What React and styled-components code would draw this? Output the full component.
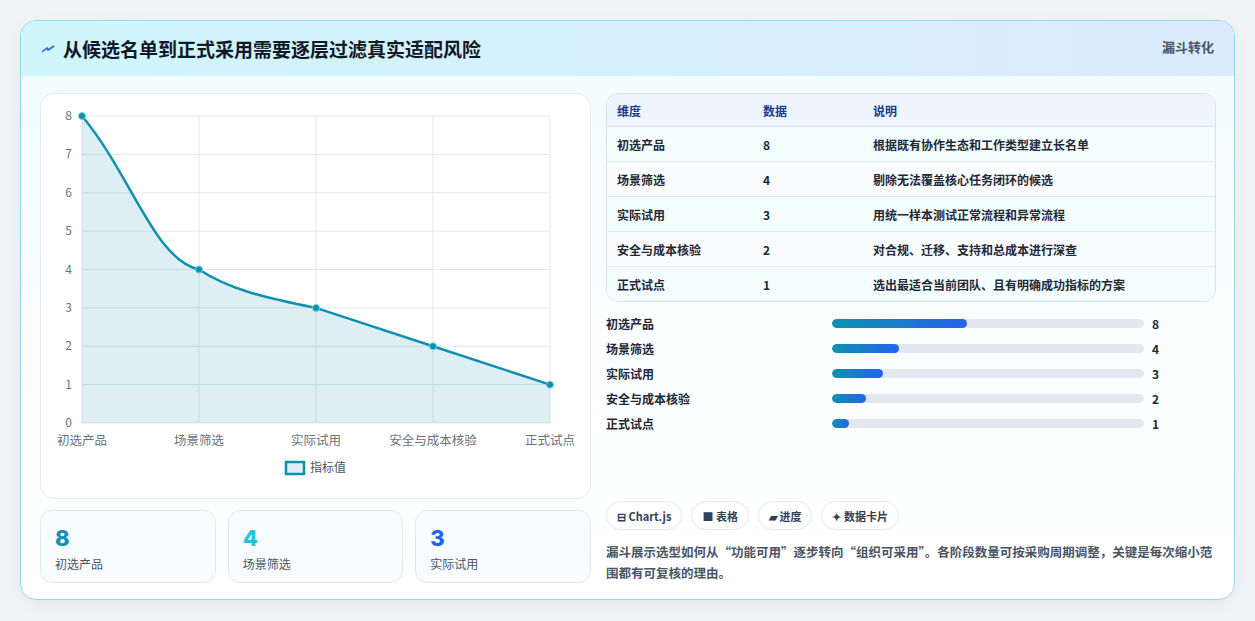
import React from "react";
import styled, { createGlobalStyle } from "styled-components";

const G = createGlobalStyle`
  body{margin:0;background:#f1f3f6;font-family:"Noto Sans CJK SC","Noto Sans",sans-serif;}
`;
const Page = styled.div`padding:20px 20px 0 20px;height:621px;box-sizing:border-box;`;
const Card = styled.div`
  height:580px;box-sizing:border-box;border:1px solid #8fdbe8;border-radius:16px;overflow:hidden;
  background:linear-gradient(180deg,#effdff,#fbfdff 50%,#ffffff);box-shadow:0 4px 14px rgba(0,0,0,.05);
  display:flex;flex-direction:column;`;
const Header = styled.div`
  height:55px;flex:none;display:flex;align-items:center;justify-content:space-between;padding:0 20px;
  background:linear-gradient(90deg,#cff6fb,#dceafe);`;
const Title = styled.h1`margin:0;font-size:19px;font-weight:700;color:#111827;display:flex;align-items:center;gap:8px;`;
const Badge = styled.span`font-size:13px;font-weight:700;color:#4b5563;align-self:flex-start;margin-top:16px;`;
const Body = styled.div`flex:1;display:grid;grid-template-columns:551px 610px;gap:15px;padding:17px 18px 18px 19px;`;
const Left = styled.div`display:flex;flex-direction:column;gap:11px;`;
const ChartBox = styled.div`height:404px;background:#fff;border:1px solid #e5eaf0;border-radius:14px;position:relative;`;
const Stats = styled.div`display:grid;grid-template-columns:repeat(3,1fr);gap:12px;`;
const Stat = styled.div`height:73px;box-sizing:border-box;border:1px solid #dfe8f0;border-radius:12px;background:#f9fcff;padding:12px 14px;`;
const StatNum = styled.div`font-size:22px;font-weight:800;line-height:30px;color:${p=>p.c};font-family:"Inter",sans-serif;`;
const StatLbl = styled.div`font-size:12px;color:#4b5563;margin-top:2px;`;
const Right = styled.div`display:flex;flex-direction:column;`;
const Table = styled.table`width:100%;border-collapse:separate;border-spacing:0;border:1px solid #d6e2ee;border-radius:12px;overflow:hidden;font-size:12px;font-weight:600;`;
const Th = styled.th`text-align:left;height:32px;padding:0 10px;background:#eef5ff;color:#1e3a8a;border-bottom:1px solid #d6e2ee;font-weight:600;width:${p=>p.w||"auto"};`;
const Td = styled.td`height:34px;padding:0 10px;color:#1f2937;background:${p=>p.odd?"#f4fdff":"#fafbfd"};border-top:${p=>p.first?"none":"1px solid #e3eaf2"};`;
const Bars = styled.div`display:flex;flex-direction:column;gap:7px;margin-top:12px;`;
const BarRow = styled.div`display:grid;grid-template-columns:226px 312px 30px;align-items:center;height:18px;font-size:12px;font-weight:600;color:#1f2937;`;
const Track = styled.div`height:9px;border-radius:5px;background:#e3e8f0;overflow:hidden;`;
const Fill = styled.div`height:100%;border-radius:5px;background:linear-gradient(90deg,#0e91b0,#2563eb);`;
const Val = styled.span`padding-left:8px;font-weight:700;`;
const Chips = styled.div`display:flex;gap:9px;margin-top:auto;`;
const Chip = styled.span`height:29px;box-sizing:border-box;padding:0 10px;border:1px solid #e2e8f0;border-radius:15px;background:#fff;font-size:11px;font-weight:700;color:#334155;display:flex;align-items:center;gap:3px;`;
const Note = styled.p`margin:11px 0 0;font-size:12.5px;font-weight:600;line-height:21px;color:#4b5563;`;

const data=[["初选产品",8,"根据既有协作生态和工作类型建立长名单"],["场景筛选",4,"剔除无法覆盖核心任务闭环的候选"],["实际试用",3,"用统一样本测试正常流程和异常流程"],["安全与成本核验",2,"对合规、迁移、支持和总成本进行深查"],["正式试点",1,"选出最适合当前团队、且有明确成功指标的方案"]];

function Chart(){
  const x0=41,y0=22,w=468,h=307; // relative to chart box (40,93)
  const xs=[0,1,2,3,4].map(i=>x0+i*w/4);
  const y=v=>y0+h-v*h/8;
  const pts=data.map((d,i)=>[xs[i],y(d[1])]);
  const line=`M${pts[0][0]},${pts[0][1]} C${pts[0][0]+50},${pts[0][1]+60} ${pts[1][0]-45},${pts[1][1]-10} ${pts[1][0]},${pts[1][1]} C${pts[1][0]+30},${pts[1][1]+20} ${pts[2][0]-50},${pts[2][1]-10} ${pts[2][0]},${pts[2][1]} L${pts[3][0]},${pts[3][1]} L${pts[4][0]},${pts[4][1]}`;
  return <svg width="551" height="404" style={{display:"block"}} fontFamily="Noto Sans CJK SC, sans-serif">
    {[0,1,2,3,4,5,6,7,8].map(v=><g key={v}><line x1={x0} x2={x0+w} y1={y(v)} y2={y(v)} stroke="#e3e7ec"/><text x={x0-10} y={y(v)+4} fontSize="12" fill="#6b7280" textAnchor="end">{v}</text></g>)}
    {xs.map((x,i)=><g key={i}><line x1={x} x2={x} y1={y0} y2={y0+h} stroke="#e3e7ec"/><text x={x} y={y0+h+22} fontSize="12.5" fill="#6b7280" textAnchor="middle">{data[i][0]}</text></g>)}
    <path d={`${line} L${x0+w},${y0+h} L${x0},${y0+h}Z`} fill="rgba(14,145,176,0.14)"/>
    <path d={line} fill="none" stroke="#0e91b0" strokeWidth="2.5"/>
    {pts.map((p,i)=><circle key={i} cx={p[0]} cy={p[1]} r="3.5" fill="#0e91b0" stroke="#7fc8da" strokeWidth="1"/>)}
    <rect x="245" y="368" width="18" height="12" fill="rgba(14,145,176,0.14)" stroke="#0e91b0" strokeWidth="2.5"/>
    <text x="269" y="378" fontSize="12" fill="#4b5563">指标值</text>
  </svg>;
}

export default function App(){
  return <Page><G/><Card>
    <Header><Title><svg width="14" height="10" viewBox="0 0 14 10"><path d="M1 8 L6 4 L7 6 L13 2" stroke="#2563eb" strokeWidth="1.6" fill="none"/></svg>从候选名单到正式采用需要逐层过滤真实适配风险</Title><Badge>漏斗转化</Badge></Header>
    <Body>
      <Left>
        <ChartBox><Chart/></ChartBox>
        <Stats>
          <Stat><StatNum c="#0e91b0">8</StatNum><StatLbl>初选产品</StatLbl></Stat>
          <Stat><StatNum c="#22c3dd">4</StatNum><StatLbl>场景筛选</StatLbl></Stat>
          <Stat><StatNum c="#2563eb">3</StatNum><StatLbl>实际试用</StatLbl></Stat>
        </Stats>
      </Left>
      <Right>
        <Table><thead><tr><Th w="126px">维度</Th><Th w="90px">数据</Th><Th>说明</Th></tr></thead>
          <tbody>{data.map((d,i)=><tr key={i}><Td odd={i%2==0} first={i==0}>{d[0]}</Td><Td odd={i%2==0} first={i==0}>{d[1]}</Td><Td odd={i%2==0} first={i==0}>{d[2]}</Td></tr>)}</tbody>
        </Table>
        <Bars>{data.map((d,i)=><BarRow key={i}><span>{d[0]}</span><Track><Fill style={{width:`${d[1]*5.4}%`}}/></Track><Val>{d[1]}</Val></BarRow>)}</Bars>
        <Chips><Chip>⊟ Chart.js</Chip><Chip>■ 表格</Chip><Chip>▰ 进度</Chip><Chip>✦ 数据卡片</Chip></Chips>
        <Note>漏斗展示选型如何从“功能可用”逐步转向“组织可采用”。各阶段数量可按采购周期调整，关键是每次缩小范围都有可复核的理由。</Note>
      </Right>
    </Body>
  </Card></Page>;
}
